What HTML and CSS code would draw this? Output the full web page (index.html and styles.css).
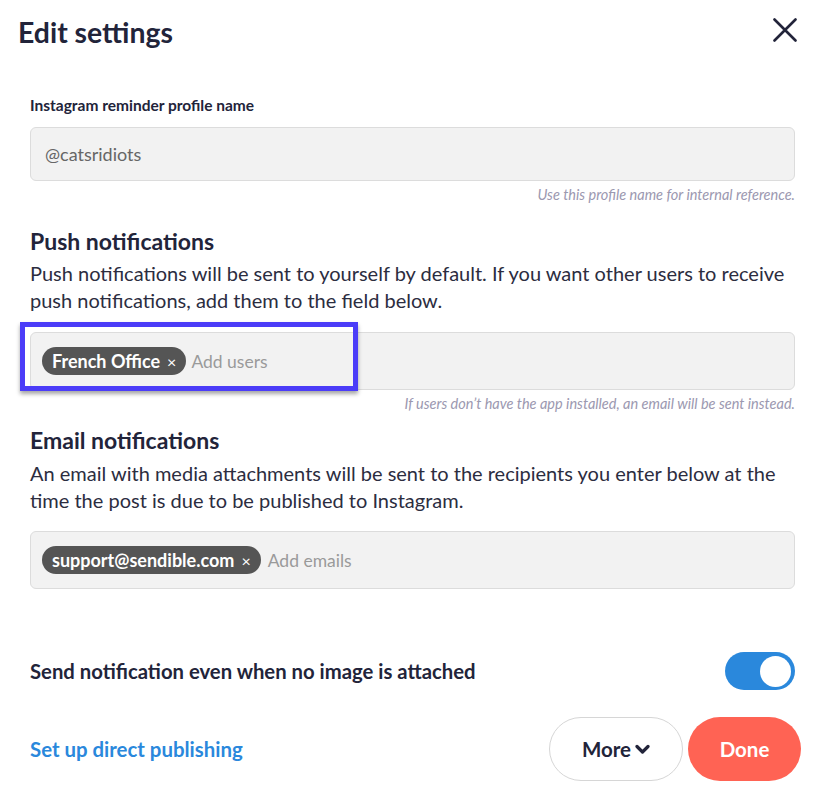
FILE: index.html
```html
<!DOCTYPE html>
<html>
<head>
<meta charset="utf-8">
<link rel="stylesheet" href="styles.css">
</head>
<body>
<div class="modal">
  <header class="header">
    <h1 class="title">Edit settings</h1>
    <svg class="close" width="24" height="24" viewBox="0 0 24 24"><path d="M1.5 1.5 L22.5 22.5 M22.5 1.5 L1.5 22.5" stroke="#22243a" stroke-width="2.6" stroke-linecap="round"/></svg>
  </header>
  <div class="content">
    <label class="label">Instagram reminder profile name</label>
    <div class="input input-text">@catsridiots</div>
    <div class="hint">Use this profile name for internal reference.</div>

    <h2 class="section-title push-title">Push notifications</h2>
    <p class="desc">Push notifications will be sent to yourself by default. If you want other users to receive push notifications, add them to the field below.</p>
    <div class="field-wrap">
      <div class="input tags"><span class="chip">French Office <span class="x">×</span></span><span class="placeholder">Add users</span></div>
      <div class="highlight"></div>
    </div>
    <div class="hint">If users don’t have the app installed, an email will be sent instead.</div>

    <h2 class="section-title email-title">Email notifications</h2>
    <p class="desc desc-email">An email with media attachments will be sent to the recipients you enter below at the time the post is due to be published to Instagram.</p>
    <div class="input tags tags-email"><span class="chip">support@sendible.com <span class="x">×</span></span><span class="placeholder">Add emails</span></div>

    <div class="toggle-row">
      <span class="toggle-label">Send notification even when no image is attached</span>
      <span class="toggle"><span class="knob"></span></span>
    </div>
  </div>
  <footer class="footer">
    <a class="link">Set up direct publishing</a>
    <div class="buttons">
      <button class="btn btn-more">More <svg width="15" height="11" viewBox="0 0 15 11"><path d="M2 2.5 L7.5 8 L13 2.5" fill="none" stroke="#22243a" stroke-width="3.2" stroke-linecap="round" stroke-linejoin="round"/></svg></button>
      <button class="btn btn-done">Done</button>
    </div>
  </footer>
</div>
</body>
</html>
```
FILE: styles.css
```css
* { box-sizing: border-box; }
body {
  margin: 0;
  font-family: Lato, "Open Sans", sans-serif;
  color: #22243a;
  background: #fff;
}
.modal {
  width: 815px;
  height: 800px;
  padding-top: 15px;
}
.header {
  display: flex;
  justify-content: space-between;
  align-items: flex-start;
  padding: 0 18px 0 18px;
}
.title {
  margin: 0;
  font-size: 28.4px;
  line-height: 34px;
  font-weight: 700;
}
.close { margin-top: 3px; }
.content {
  padding: 0 20px 0 30px;
}
.label {
  display: block;
  margin-top: 47px;
  font-size: 15.5px;
  line-height: 18px;
  font-weight: 700;
}
.input {
  background: #f2f2f2;
  border: 1px solid #dcdcdc;
  border-radius: 6px;
}
.input-text {
  margin-top: 13px;
  height: 54px;
  padding: 0 14px;
  display: flex;
  align-items: center;
  font-size: 18px;
  color: #666;
}
.hint {
  text-align: right;
  font-size: 14.5px;
  font-style: italic;
  line-height: 18px;
  color: #9b98b0;
  margin-top: 5px;
}
.section-title {
  margin: 0;
  font-size: 23px;
  line-height: 28px;
  font-weight: 700;
}
.push-title { margin-top: 23px; }
.email-title { margin-top: 13px; }
.desc {
  margin: 5px 0 0;
  font-size: 20px;
  line-height: 27px;
  color: #2c2d3f;
}
.desc-email { margin-top: 6px; }
.field-wrap {
  position: relative;
  margin-top: 18px;
}
.tags {
  height: 58px;
  padding: 0 11px;
  display: flex;
  align-items: center;
  gap: 5px;
}
.tags-email { margin-top: 17px; }
.chip {
  display: inline-flex;
  align-items: center;
  height: 28px;
  padding: 0 10px;
  border-radius: 14px;
  background: #555;
  color: #fff;
  font-weight: 700;
  font-size: 18px;
}
.chip .x {
  margin-left: 7px;
  font-weight: 400;
  font-size: 16px;
}
.placeholder {
  font-size: 17.5px;
  color: #9a9a9a;
}
.tags-email .placeholder { margin-left: 2px; }
.highlight {
  position: absolute;
  left: -10px;
  top: -10px;
  width: 338px;
  height: 69px;
  border: 5px solid #4b3cf8;
  box-shadow: 0 3px 4px rgba(0,0,0,0.35);
}
.toggle-row {
  display: flex;
  justify-content: space-between;
  align-items: center;
  margin-top: 63px;
}
.toggle-label {
  font-size: 20.3px;
  font-weight: 700;
}
.toggle {
  width: 70px;
  height: 38px;
  border-radius: 19px;
  background: #2a88dc;
  display: flex;
  align-items: center;
  justify-content: flex-end;
  padding-right: 4px;
}
.knob {
  width: 31px;
  height: 31px;
  border-radius: 50%;
  background: #fff;
}
.footer {
  display: flex;
  justify-content: space-between;
  align-items: center;
  padding: 0 14px 0 30px;
  margin-top: 27px;
}
.link {
  color: #2a88dc;
  font-size: 20.4px;
  font-weight: 700;
}
.buttons {
  display: flex;
  gap: 5px;
}
.btn {
  height: 64px;
  border-radius: 32px;
  font-family: Lato, sans-serif;
  font-size: 20.5px;
  font-weight: 700;
  display: flex;
  align-items: center;
  justify-content: center;
}
.btn-more {
  width: 134px;
  background: #fff;
  border: 1px solid #d6d6d6;
  color: #22243a;
  gap: 4px;
}
.btn-done {
  width: 113px;
  background: #ff6354;
  border: none;
  color: #fff;
}
```
